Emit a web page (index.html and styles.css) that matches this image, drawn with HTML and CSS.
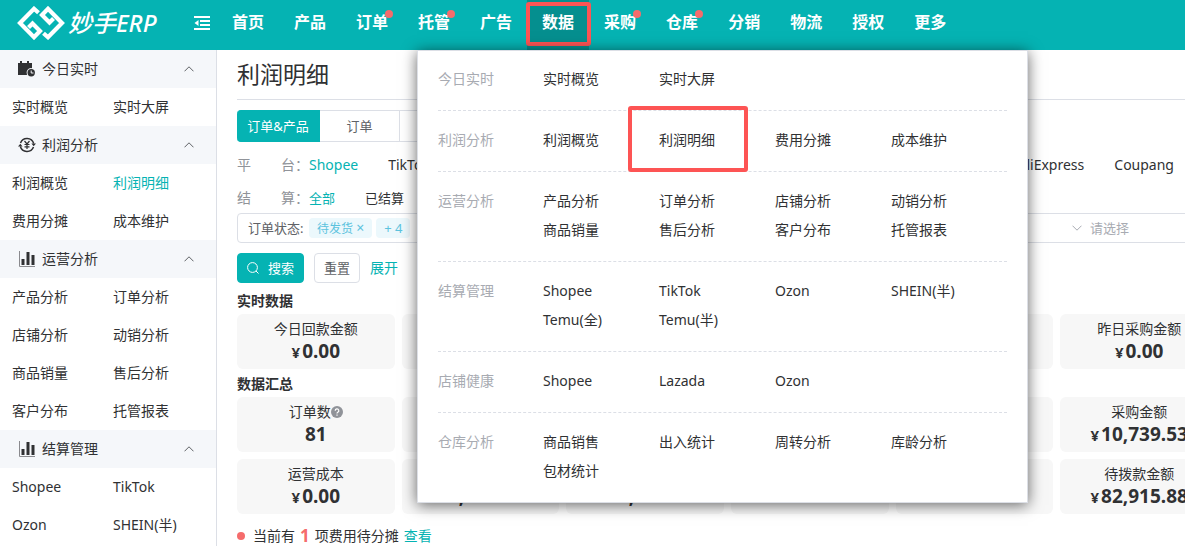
FILE: index.html
```html
<!DOCTYPE html>
<html lang="zh-CN">
<head>
  <meta charset="UTF-8" />
  <meta name="viewport" content="width=device-width, initial-scale=1" />
  <title>利润明细 - 妙手ERP</title>
  <link rel="stylesheet" href="styles.css">
</head>
<body>
  <svg width="0" height="0" class="sprite" aria-hidden="true">
    <symbol id="icon-up" viewBox="0 0 10 6"><path d="M.5 5.3 5 .8l4.500 4.500" fill="none" stroke="currentColor" /></symbol>
    <symbol id="icon-bars" viewBox="0 0 16 16">
      <path d="M.5 0v15.500H16" fill="none" stroke="#8a8a8e" />
      <path d="M2.500 8h3v6h-3zM7.500 1h3v13h-3zM12.500 4h3v10h-3z" fill="currentColor" />
    </symbol>
  </svg>

  <header class="topbar">
    <a class="logo" href="#">
      <svg width="48" height="34" viewBox="0 0 48 34" fill="none" stroke="#fff" stroke-width="4.200">
        <path d="M21.500 6.800 17 2.800 3 17l14 14.200 6-6.200-7.500-7.500-4 4" />
        <path d="M26.500 27.200l4.500 4L45 17 31 2.800 25 9l7.500 7.500 4-4" />
      </svg>
      <span>妙手ERP</span>
    </a>
    <button class="fold" type="button" aria-label="收起菜单">
      <svg width="16" height="14" viewBox="0 0 16 14" fill="none" stroke="#fff" stroke-width="2">
        <path d="M0 1h16M6 5h10M6 9h10M0 13h16" /><path d="M4.500 4v6L.5 7z" fill="#fff" stroke="none" />
      </svg>
    </button>
    <nav class="nav">
      <a href="#">首页</a>
      <a href="#">产品</a>
      <a href="#" class="dot">订单</a>
      <a href="#" class="dot">托管</a>
      <a href="#">广告</a>
      <a href="#" class="active">数据</a>
      <a href="#" class="dot">采购</a>
      <a href="#" class="dot">仓库</a>
      <a href="#">分销</a>
      <a href="#">物流</a>
      <a href="#">授权</a>
      <a href="#">更多</a>
    </nav>

    <div class="mega-menu">
      <section class="menu-group">
        <h3>今日实时</h3>
        <div class="menu-links"><a href="#">实时概览</a><a href="#">实时大屏</a></div>
      </section>
      <section class="menu-group">
        <h3>利润分析</h3>
        <div class="menu-links"><a href="#">利润概览</a><a href="#" class="marked">利润明细</a><a href="#">费用分摊</a><a href="#">成本维护</a></div>
      </section>
      <section class="menu-group">
        <h3>运营分析</h3>
        <div class="menu-links">
          <a href="#">产品分析</a><a href="#">订单分析</a><a href="#">店铺分析</a><a href="#">动销分析</a>
          <a href="#">商品销量</a><a href="#">售后分析</a><a href="#">客户分布</a><a href="#">托管报表</a>
        </div>
      </section>
      <section class="menu-group">
        <h3>结算管理</h3>
        <div class="menu-links">
          <a href="#">Shopee</a><a href="#">TikTok</a><a href="#">Ozon</a><a href="#">SHEIN(半)</a>
          <a href="#">Temu(全)</a><a href="#">Temu(半)</a>
        </div>
      </section>
      <section class="menu-group">
        <h3>店铺健康</h3>
        <div class="menu-links"><a href="#">Shopee</a><a href="#">Lazada</a><a href="#">Ozon</a></div>
      </section>
      <section class="menu-group">
        <h3>仓库分析</h3>
        <div class="menu-links">
          <a href="#">商品销售</a><a href="#">出入统计</a><a href="#">周转分析</a><a href="#">库龄分析</a>
          <a href="#">包材统计</a>
        </div>
      </section>
    </div>
  </header>

  <div class="layout">
    <aside class="sidebar">
      <h2>
        <svg width="18" height="16" viewBox="0 0 18 16" fill="currentColor">
          <path d="M0 2h2V0h2v2h5V0h2v2h3v5.200A4.700 4.700 0 0 0 9 14H0z" />
          <circle cx="13.200" cy="11.800" r="3.700" /><path d="M13.200 9.500v2.500h2.300" fill="none" stroke="#f5f7fa" />
        </svg>
        今日实时
        <svg class="arrow"><use href="#icon-up" /></svg>
      </h2>
      <div class="side-links"><a href="#">实时概览</a><a href="#">实时大屏</a></div>
      <h2>
        <svg width="18" height="16" viewBox="0 0 18 16" fill="none" stroke="currentColor" stroke-width="1.500">
          <path d="M2.500 6A7 7 0 0 1 15.700 6.500M15.500 10A7 7 0 0 1 2.300 9.500" />
          <path d="M0 9.500h4.600L2.300 6.800zM18 6.500h-4.600l2.300 2.700z" fill="currentColor" stroke="none" />
          <path d="M6.500 4 9 7l2.500-3M9 7v5M6.500 7.500h5M6.500 9.800h5" stroke-width="1.200" />
        </svg>
        利润分析
        <svg class="arrow"><use href="#icon-up" /></svg>
      </h2>
      <div class="side-links"><a href="#">利润概览</a><a href="#" class="current">利润明细</a><a href="#">费用分摊</a><a href="#">成本维护</a></div>
      <h2>
        <svg width="18" height="16"><use href="#icon-bars" /></svg>
        运营分析
        <svg class="arrow"><use href="#icon-up" /></svg>
      </h2>
      <div class="side-links">
        <a href="#">产品分析</a><a href="#">订单分析</a><a href="#">店铺分析</a><a href="#">动销分析</a>
        <a href="#">商品销量</a><a href="#">售后分析</a><a href="#">客户分布</a><a href="#">托管报表</a>
      </div>
      <h2>
        <svg width="18" height="16"><use href="#icon-bars" /></svg>
        结算管理
        <svg class="arrow"><use href="#icon-up" /></svg>
      </h2>
      <div class="side-links"><a href="#">Shopee</a><a href="#">TikTok</a><a href="#">Ozon</a><a href="#">SHEIN(半)</a></div>
    </aside>

    <main class="content">
      <h1>利润明细</h1>

      <div class="tabs">
        <button type="button" class="on">订单&amp;产品</button>
        <button type="button">订单</button>
        <button type="button">产品</button>
      </div>

      <div class="filter platforms">
        <span class="filter-label"><span>平</span><span>台：</span></span>
        <a href="#" class="current">Shopee</a><a href="#">TikTok</a><a href="#">Lazada</a><a href="#">Ozon</a>
        <a href="#">SHEIN(半)</a><a href="#">Temu(全)</a><a href="#">Temu(半)</a><a href="#">eBay</a><a href="#">Amazon</a>
        <a href="#">AliExpress</a><a href="#">Coupang</a>
      </div>
      <div class="filter">
        <span class="filter-label"><span>结</span><span>算：</span></span>
        <a href="#" class="current">全部</a><a href="#">已结算</a>
      </div>

      <div class="search-bar">
        <span class="search-label">订单状态:</span>
        <span class="tag">待发货 <i>×</i></span>
        <span class="tag">+ 4</span>
        <svg class="down" width="10" height="6" viewBox="0 0 10 6"><path d="M.5.7 5 5.200 9.500.7" fill="none" stroke="currentColor" /></svg>
        <input type="text" placeholder="请选择" aria-label="请选择" />
      </div>

      <div class="actions">
        <button type="button" class="primary">
          <svg width="12" height="12" viewBox="0 0 12 12" fill="none" stroke="#fff"><circle cx="5.500" cy="5.500" r="4.900" /><path d="m9 9 2.500 2.500" /></svg>
          搜索
        </button>
        <button type="button">重置</button>
        <a href="#">展开</a>
      </div>

      <h4>实时数据</h4>
      <div class="cards">
        <div class="card">今日回款金额<strong><small>¥</small>0.00</strong></div>
        <div class="card">昨日回款金额<strong><small>¥</small>0.00</strong></div>
        <div class="card">今日广告费<strong><small>¥</small>0.00</strong></div>
        <div class="card">昨日广告费<strong><small>¥</small>0.00</strong></div>
        <div class="card">今日采购金额<strong><small>¥</small>0.00</strong></div>
        <div class="card">昨日采购金额<strong><small>¥</small>0.00</strong></div>
      </div>

      <h4>数据汇总</h4>
      <div class="cards">
        <div class="card">
          <span class="with-help">订单数<svg width="12" height="12" viewBox="0 0 12 12"><circle cx="6" cy="6" r="6" fill="#909399" /><path d="M4.200 4.700a1.800 1.800 0 1 1 2.600 1.600Q6 6.700 6 7.400M6 8.600v1.200" fill="none" stroke="#fff" stroke-width="1.200" /></svg></span>
          <strong>81</strong>
        </div>
        <div class="card">销售金额<strong><small>¥</small>0.00</strong></div>
        <div class="card">回款金额<strong><small>¥</small>0.00</strong></div>
        <div class="card">广告费<strong><small>¥</small>0.00</strong></div>
        <div class="card">利润<strong><small>¥</small>0.00</strong></div>
        <div class="card">采购金额<strong><small>¥</small>10,739.53</strong></div>
        <div class="card">运营成本<strong><small>¥</small>0.00</strong></div>
        <div class="card">结算金额<strong><small>¥</small>5,600.80</strong></div>
        <div class="card">退款金额<strong><small>¥</small>12,850.60</strong></div>
        <div class="card">利润率<strong>0.00</strong></div>
        <div class="card">成本利润率<strong>0.00</strong></div>
        <div class="card">待拨款金额<strong><small>¥</small>82,915.88</strong></div>
      </div>

      <p class="notice">当前有 <b>1</b> 项费用待分摊 <a href="#">查看</a></p>
    </main>
  </div>
</body>
</html>
```
FILE: styles.css
```css
* {
  box-sizing: border-box;
}
body {
  margin: 0;
  overflow: hidden;
  font-family: 'Noto Sans', 'Noto Sans CJK SC', sans-serif;
  font-size: 14px;
  line-height: 20px;
  color: #303133;
  background: #fff;
}
a {
  color: inherit;
  text-decoration: none;
}
h1, h2, h3, h4, p {
  margin: 0;
  font-weight: normal;
}
button, input {
  font: inherit;
  color: inherit;
  margin: 0;
}
.sprite {
  position: absolute;
}

/* top bar */
.topbar {
  position: relative;
  z-index: 10;
  display: flex;
  height: 50px;
  background: #05b3b3;
  color: #fff;
}
.logo {
  display: flex;
  align-items: center;
  gap: 3px;
  width: 194px;
  height: 46px;
  padding-left: 17px;
  font-size: 24px;
  font-style: italic;
  font-weight: 500;
}
.fold {
  width: 23px;
  height: 46px;
  padding: 0;
  border: none;
  background: none;
  text-align: left;
}
.fold svg {
  display: block;
}
.nav {
  display: flex;
}
.nav a {
  position: relative;
  padding: 0 15px;
  font-size: 16px;
  font-weight: bold;
  line-height: 44px;
}
.nav .active {
  background: #058f8f;
}
.nav .active::after {
  content: "";
  position: absolute;
  inset: 2px -2px 4px -1px;
  border: 4px solid #fd5454;
  border-radius: 3px;
}
.nav .dot::after {
  content: "";
  position: absolute;
  top: 10px;
  right: 10px;
  width: 8px;
  height: 8px;
  border-radius: 50%;
  background: #f56c6c;
}

/* drop-down under the top bar */
.mega-menu {
  position: absolute;
  top: 50px;
  left: 417px;
  width: 611px;
  padding: 0 20px;
  border: 1px solid #dcdfe6;
  background: #fff;
  box-shadow: 0 2px 14px rgba(0, 0, 0, 0.6);
  color: #303133;
}
.menu-group {
  display: flex;
  padding: 14px 0 17px;
  border-bottom: 1px dashed #dcdfe6;
  line-height: 29px;
}
.menu-group:first-child {
  padding-top: 13px;
}
.menu-group:last-child {
  border-bottom: none;
}
.menu-group h3 {
  width: 105px;
  font-size: 14px;
  color: #a8abb2;
}
.menu-links {
  display: grid;
  grid-template-columns: repeat(4, 116px);
}
.marked {
  position: relative;
}
.marked::after {
  content: "";
  position: absolute;
  inset: -19px 27px -18px -31px;
  border: 4px solid #fd5454;
  border-radius: 3px;
}

/* side menu */
.layout {
  display: flex;
}
.sidebar {
  flex: none;
  width: 217px;
  border-right: 1px solid #dcdfe6;
}
.sidebar h2 {
  display: flex;
  align-items: center;
  gap: 6px;
  height: 38px;
  padding: 0 22px 0 18px;
  background: #f5f7fa;
  font-size: 14px;
}
.arrow {
  width: 10px;
  height: 6px;
  margin-left: auto;
  color: #606266;
}
.side-links {
  display: grid;
  grid-template-columns: 101px 1fr;
  padding-left: 12px;
  line-height: 38px;
}
.current {
  color: #05b3b3;
}

/* page */
.content {
  flex: 1;
  min-width: 1001px;
  padding: 0 0 0 20px;
}
.content h1 {
  padding: 8px 0 9px;
  border-bottom: 1px solid #dcdfe6;
  font-size: 23px;
  line-height: 32px;
}
.tabs {
  display: flex;
  margin: 10px 0 8px;
}
.tabs button {
  width: 80px;
  height: 32px;
  padding: 0;
  border: 1px solid #dcdfe6;
  border-left: none;
  background: #fff;
  font-size: 13px;
  color: #606266;
}
.tabs .on {
  width: 83px;
  border-color: #05b3b3;
  border-radius: 4px 0 0 4px;
  background: #05b3b3;
  color: #fff;
}
.filter {
  display: flex;
  gap: 30px;
  font-size: 13px;
  line-height: 30px;
}
.platforms {
  margin-bottom: 3px;
  font-size: 14px;
}
.filter-label {
  display: flex;
  justify-content: space-between;
  width: 72px;
  margin-right: -30px;
  font-size: 14px;
  color: #909399;
}
.search-bar {
  display: flex;
  align-items: center;
  gap: 4px;
  height: 30px;
  padding-left: 10px;
  border: 1px solid #dcdfe6;
  border-radius: 4px;
  font-size: 13px;
}
.search-label {
  width: 57px;
  color: #606266;
}
.tag {
  height: 20px;
  padding: 0 8px;
  border-radius: 4px;
  background: #ecf8fc;
  font-size: 12px;
  color: #5cc3de;
}
.tag + .tag {
  font-size: 13px;
}
.tag i {
  font-size: 14px;
  font-style: normal;
}
.down {
  margin-left: auto;
  color: #a8abb2;
}
.search-bar input {
  width: 131px;
  height: 28px;
  padding: 0 4px;
  border: none;
  background: none;
}
.search-bar input::placeholder {
  color: #a8abb2;
}
.actions {
  display: flex;
  align-items: center;
  gap: 10px;
  margin: 10px 0 8px;
}
.actions button {
  display: flex;
  align-items: center;
  gap: 9px;
  height: 30px;
  padding: 0 9px;
  border: 1px solid #dcdfe6;
  border-radius: 4px;
  background: #fff;
  font-size: 13px;
  color: #606266;
}
.actions .primary {
  border-color: #05b3b3;
  background: #05b3b3;
  color: #fff;
}
.actions a, .notice a {
  color: #05b3b3;
}
.content h4 {
  font-size: 14px;
  font-weight: bold;
}
.cards {
  display: grid;
  grid-template-columns: repeat(6, 1fr);
  gap: 7px;
  margin: 3px 0 5px;
}
.card {
  height: 55px;
  padding-top: 5px;
  border-radius: 6px;
  background: #f7f7f7;
  text-align: center;
}
.card strong {
  display: block;
  font-size: 19px;
  line-height: 25px;
}
.card small {
  margin-right: 2px;
  font-size: 15px;
}
.with-help svg {
  vertical-align: -1px;
}
.notice {
  display: flex;
  align-items: center;
  gap: 5px;
  padding-top: 7px;
}
.notice::before {
  content: "";
  width: 8px;
  height: 8px;
  margin-right: 3px;
  border-radius: 50%;
  background: #f56c6c;
}
.notice b {
  font-size: 17px;
  color: #f56c6c;
}
```
